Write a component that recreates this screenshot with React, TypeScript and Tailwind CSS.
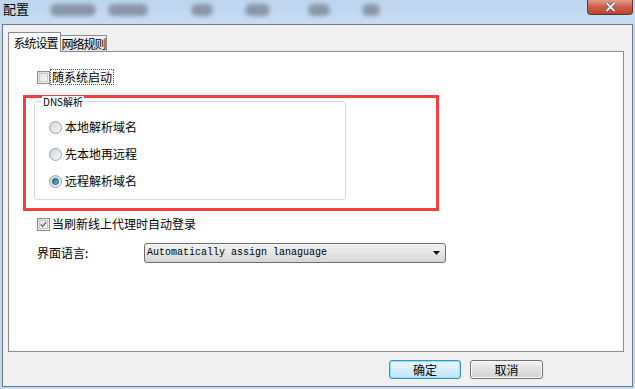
import React from 'react';

const font = { fontFamily: '"Noto Sans CJK SC", "Noto Sans", sans-serif' };

function Check({ checked }: { checked?: boolean }) {
  return (
    <span className="w-[13px] h-[13px] border border-[#8f8f8f] bg-gradient-to-br from-[#dcdcdc] to-[#f8f8f8] flex items-center justify-center shrink-0">
      <span className="w-[9px] h-[9px] border border-[#c9c9c9] bg-gradient-to-br from-[#e2e2e2] to-[#fafafa] flex items-center justify-center">
        {checked && (
          <svg width="9" height="9" viewBox="0 0 9 9">
            <path d="M1 4.5 L3.5 7 L8 1.5" fill="none" stroke="#4a5a6a" strokeWidth="1.6" />
          </svg>
        )}
      </span>
    </span>
  );
}

function Radio({ checked }: { checked?: boolean }) {
  return (
    <span className="w-[13px] h-[13px] rounded-full border border-[#9aa6b4] bg-gradient-to-br from-[#c8ccd2] to-[#f6f6f6] flex items-center justify-center shrink-0">
      <span
        className={
          checked
            ? 'w-[7px] h-[7px] rounded-full bg-gradient-to-br from-[#1c5f8c] to-[#5fd2f5] border border-[#2b4f6b]'
            : 'w-[9px] h-[9px] rounded-full bg-gradient-to-br from-[#d7dbe0] to-[#f4f5f6]'
        }
      />
    </span>
  );
}

export default function App() {
  // blurred toolbar behind the title bar
  const blobs = [
    [50, 46],
    [108, 40],
    [191, 22],
    [245, 25],
    [308, 22],
    [362, 18],
  ];
  return (
    <div className="w-[635px] h-[389px] bg-[#c4daf0] flex flex-col overflow-hidden text-black" style={font}>
      {/* title bar */}
      <div className="h-[24px] relative shrink-0 bg-gradient-to-b from-[#bcd5ee] to-[#c7dcf0]">
        <span className="absolute left-[3px] top-[1px] text-[13px] leading-[16px]">配置</span>
        {blobs.map(([x, w], i) => (
          <span
            key={i}
            className="absolute top-[4px] h-[12px] rounded-full bg-[#6f7c8a] opacity-70 blur-[2px]"
            style={{ left: x, width: w }}
          />
        ))}
        <div className="absolute right-[2px] top-0 w-[46px] h-[15px] rounded-b-[4px] border border-t-0 border-[#5a3a34] bg-gradient-to-b from-[#e19a86] via-[#cb5c48] to-[#c2402c] flex items-center justify-center">
          <svg width="11" height="10" viewBox="0 0 11 10">
            <path d="M1.5 1 L9.5 9 M9.5 1 L1.5 9" stroke="#3e4a5a" strokeWidth="3.2" />
            <path d="M1.5 1 L9.5 9 M9.5 1 L1.5 9" stroke="#ffffff" strokeWidth="1.8" />
          </svg>
        </div>
      </div>

      {/* window body */}
      <div className="flex-1 mx-[2px] mb-[2px] border border-[#6f7a86] bg-[#f0f0f0] flex flex-col pl-[5px] pr-[8px] pt-[7px]">
        {/* tabs */}
        <div className="flex items-end h-[19px] text-[12px] tracking-[-1px] whitespace-nowrap">
          <div className="w-[53px] h-[20px] border border-b-0 border-[#898c95] bg-white flex items-center justify-center relative -mb-px z-10 pl-[2px]">
            系统设置
          </div>
          <div className="w-[46px] h-[16px] border border-l-0 border-b-0 border-[#898c95] bg-gradient-to-b from-[#f2f2f2] to-[#e3e3e3] flex items-center justify-center">
            网络规则
          </div>
        </div>

        {/* panel */}
        <div className="w-[616px] h-[301px] border border-[#898c95] bg-white flex flex-col text-[12px] leading-[14px]">
          <div className="flex items-center mt-[18px] ml-[28px] h-[14px]">
            <Check />
            <span className="ml-[1px] px-[1px] outline outline-1 outline-dotted outline-[#555]">随系统启动</span>
          </div>

          <div className="mt-[11px] ml-[14px] w-[416px] h-[116px] border-[3px] border-[#fa3c3c] pl-[8px] pt-[3px]">
            <div className="w-[312px] h-[99px] border border-[#d5dcdf] rounded-[3px] relative flex flex-col pl-[14px] pt-[18px] gap-[13px]">
              <span className="absolute left-[7px] -top-[6px] bg-white px-[1px] text-[10px] leading-[11px]">DNS解析</span>
              <div className="flex items-center gap-[3px]">
                <Radio />
                <span>本地解析域名</span>
              </div>
              <div className="flex items-center gap-[3px]">
                <Radio />
                <span>先本地再远程</span>
              </div>
              <div className="flex items-center gap-[3px]">
                <Radio checked />
                <span>远程解析域名</span>
              </div>
            </div>
          </div>

          <div className="flex items-center mt-[6px] ml-[28px] h-[14px]">
            <Check checked />
            <span className="ml-[2px]">当刷新线上代理时自动登录</span>
          </div>

          <div className="flex items-center mt-[12px] ml-[28px] h-[20px]">
            <span className="w-[107px]">界面语言:</span>
            <div className="w-[302px] h-[20px] border border-[#707070] rounded-[3px] bg-gradient-to-b from-[#f2f2f2] via-[#e6e6e6] to-[#d3d3d3] flex items-center pl-[2px] pr-[5px]">
              <span className="flex-1 text-[10px]" style={{ fontFamily: '"Liberation Mono", monospace' }}>
                Automatically assign lanaguage
              </span>
              <svg width="7" height="4" viewBox="0 0 7 4">
                <path d="M0 0 H7 L3.5 4 Z" fill="#111" />
              </svg>
            </div>
          </div>
        </div>

        {/* buttons */}
        <div className="flex justify-end gap-[9px] mt-[8px] pr-[81px] text-[12px]">
          <button className="w-[72px] h-[19px] rounded-[3px] border border-[#3c8fc8] shadow-[inset_0_0_0_1px_#8fe0fa] bg-gradient-to-b from-[#eaf6fd] to-[#bee6fd] flex items-center justify-center">
            确定
          </button>
          <button className="w-[73px] h-[19px] rounded-[3px] border border-[#707070] shadow-[inset_0_0_0_1px_#fcfcfc] bg-gradient-to-b from-[#f2f2f2] to-[#d0d0d0] flex items-center justify-center">
            取消
          </button>
        </div>
      </div>
    </div>
  );
}
